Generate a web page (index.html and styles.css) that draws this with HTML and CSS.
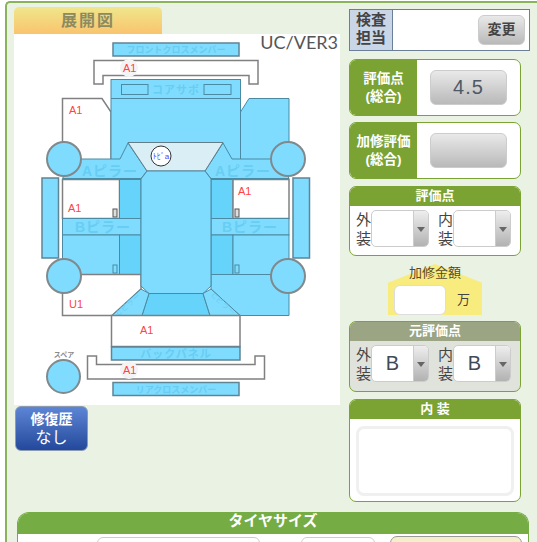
FILE: index.html
```html
<!DOCTYPE html>
<html lang="ja">

<head>
    <meta charset="UTF-8">
    <meta name="viewport" content="width=device-width, initial-scale=1.0">
    <title>展開図</title>
    <link rel="stylesheet" href="styles.css">
</head>

<body>
    <div class="frame">
        <div class="main">
            <div class="left">
                <div class="tab">展開図</div>
                <svg class="diagram" width="326" height="371" viewBox="14 34 326 371">
                    <!-- front -->
                    <rect class="part edge" x="113" y="43" width="126" height="13"/>
                    <text class="faint small" x="176" y="53">フロントクロスメンバー</text>
                    <path class="blank" d="M94 60.500H258V84H249V75.500H103V84H94Z"/>
                    <circle class="bubble" cx="129" cy="68" r="9"/>
                    <text class="mark" x="123" y="72">A1</text>

                    <!-- core support and fenders -->
                    <path class="blank" d="M62.500 98.500H102L111 112V160H62.500Z"/>
                    <rect class="part" x="111" y="79.500" width="129.500" height="95"/>
                    <path class="line" d="M111 98.500H240.500"/>
                    <rect class="part" x="121.500" y="84.500" width="26.500" height="10"/>
                    <rect class="part" x="204" y="84.500" width="27" height="10"/>
                    <text class="faint mid" x="176" y="94">コアサポ</text>
                    <path class="part" d="M240.500 112L249 98.500H289V160H240.500Z"/>

                    <!-- side skirts -->
                    <rect class="part edge" x="42" y="178" width="16.500" height="80"/>
                    <rect class="part edge" x="293" y="178" width="16.500" height="80"/>

                    <!-- left doors -->
                    <rect class="blank" x="62.500" y="179.500" width="57" height="39"/>
                    <rect class="deep" x="119.500" y="179.500" width="21.500" height="39"/>
                    <rect class="part" x="62.500" y="218.500" width="78.500" height="16.500"/>
                    <text class="faint" x="103" y="232">Bピラー</text>
                    <rect class="part" x="62.500" y="235" width="57" height="39.500"/>
                    <rect class="deep" x="119.500" y="235" width="21.500" height="39.500"/>

                    <!-- right doors -->
                    <rect class="deep" x="211" y="179.500" width="22" height="39"/>
                    <rect class="blank" x="233" y="179.500" width="56" height="39"/>
                    <rect class="part" x="211" y="218.500" width="78" height="16.500"/>
                    <text class="faint" x="250" y="232">Bピラー</text>
                    <rect class="deep" x="211" y="235" width="22" height="39.500"/>
                    <rect class="part" x="233" y="235" width="56" height="39.500"/>

                    <rect class="tag" x="113" y="209" width="4" height="8"/>
                    <rect class="tag" x="235" y="209" width="4" height="8"/>
                    <rect class="tag dim" x="113" y="265" width="4" height="8"/>
                    <rect class="tag dim" x="235" y="265" width="4" height="8"/>

                    <!-- rear quarters -->
                    <path class="blank" d="M62.500 274.500H141V289L112 315.500H62.500Z"/>
                    <path class="part" d="M211 274.500H289V315.500H240L211 289Z"/>

                    <!-- windshield and pillars -->
                    <path class="part" d="M62.500 178.500L72 159H120L128 143L147 171L141 178.500Z"/>
                    <path class="part" d="M289 178.500L280 159H232L223 143L205 171L211 178.500Z"/>
                    <text class="faint" x="110" y="176">Aピラー</text>
                    <text class="faint" x="243" y="176">Aピラー</text>
                    <path class="glass" d="M128 142.500H223L205 171H147Z"/>
                    <circle class="badge" cx="161" cy="156" r="10"/>
                    <text class="badge-text" x="161" y="159">ﾄﾋﾞa</text>

                    <!-- roof and rear glass -->
                    <path class="part" d="M147 171H205L211 179V286L203 293.500H149L141 286V179Z"/>
                    <path class="deep" d="M149 293.500H203L210 315.500H142Z"/>
                    <path class="part" d="M112 315.500L141 289L149 293.500L142 315.500Z"/>
                    <path class="part" d="M240 315.500L211 289L203 293.500L210 315.500Z"/>
                    <text class="faint tiny" transform="translate(130 306) rotate(-42)">Cピラー</text>
                    <text class="faint tiny" transform="translate(222 306) rotate(42)">Cピラー</text>

                    <!-- rear -->
                    <rect class="blank" x="111.500" y="315.500" width="128.500" height="31"/>
                    <rect class="part edge" x="111.500" y="347" width="128.500" height="13"/>
                    <text class="faint mid" x="176" y="358">バックパネル</text>
                    <path class="blank" d="M87.500 356H96.500V364.500H255V356H264.500V379H87.500Z"/>
                    <circle class="bubble" cx="129" cy="370" r="9"/>
                    <rect class="part edge" x="113" y="382.500" width="126" height="13"/>
                    <text class="faint small" x="176" y="392.500">リアクロスメンバー</text>

                    <!-- wheels -->
                    <circle class="wheel" cx="64" cy="159" r="17"/>
                    <circle class="wheel" cx="288" cy="159" r="17"/>
                    <circle class="wheel" cx="64" cy="276" r="17"/>
                    <circle class="wheel" cx="288" cy="276" r="17"/>
                    <circle class="wheel" cx="63.500" cy="376.500" r="16.500"/>
                    <text class="spare" x="64" y="357">スペア</text>

                    <text class="mark" x="69" y="114">A1</text>
                    <text class="mark" x="68" y="212">A1</text>
                    <text class="mark" x="238" y="195">A1</text>
                    <text class="mark" x="69" y="308">U1</text>
                    <text class="mark" x="140" y="334">A1</text>
                    <text class="mark" x="123" y="374">A1</text>
                    <text class="version" x="338" y="49">UC/VER3</text>
                </svg>
                <div class="repair">
                    <span class="repair-title">修復歴</span>
                    <span class="repair-value">なし</span>
                </div>
            </div>

            <div class="right">
                <div class="inspector">
                    <div class="inspector-label">検査<br>担当</div>
                    <div class="inspector-body">
                        <div class="btn btn-change">変更</div>
                    </div>
                </div>

                <div class="score">
                    <div class="score-label">評価点<br>(総合)</div>
                    <div class="score-body">
                        <div class="btn btn-score">4.5</div>
                    </div>
                </div>
                <div class="score">
                    <div class="score-label">加修評価<br>(総合)</div>
                    <div class="score-body">
                        <div class="btn btn-score"></div>
                    </div>
                </div>

                <div class="panel panel-rate">
                    <div class="panel-head">評価点</div>
                    <div class="picks">
                        <div class="pick-label">外<br>装</div>
                        <div class="pick">
                            <div class="pick-value"></div>
                            <div class="pick-arrow"></div>
                        </div>
                        <div class="pick-label">内<br>装</div>
                        <div class="pick">
                            <div class="pick-value"></div>
                            <div class="pick-arrow"></div>
                        </div>
                    </div>
                </div>

                <div class="amount">
                    <div class="amount-title">加修金額</div>
                    <div class="amount-row">
                        <div class="amount-input"></div>
                        <div class="amount-unit">万</div>
                    </div>
                </div>

                <div class="panel panel-orig">
                    <div class="panel-head">元評価点</div>
                    <div class="picks">
                        <div class="pick-label">外<br>装</div>
                        <div class="pick">
                            <div class="pick-value">B</div>
                            <div class="pick-arrow"></div>
                        </div>
                        <div class="pick-label">内<br>装</div>
                        <div class="pick">
                            <div class="pick-value">B</div>
                            <div class="pick-arrow"></div>
                        </div>
                    </div>
                </div>

                <div class="panel panel-inner">
                    <div class="panel-head">内 装</div>
                    <div class="note"></div>
                </div>
            </div>
        </div>

        <div class="tire">
            <div class="tire-head">タイヤサイズ</div>
            <div class="tire-body">
                <div class="tire-input tire-wide"></div>
                <div class="tire-input tire-narrow"></div>
                <div class="tire-button"></div>
            </div>
        </div>
    </div>
</body>

</html>
```

FILE: styles.css
```css
html,
body {
    margin: 0;
    padding: 0;
    height: 542px;
    overflow: hidden;
    background-color: #fff;
    font-family: "Liberation Sans", "Noto Sans CJK JP", sans-serif;
    color: #444;
}

.frame {
    margin: 1px 0 0 5px;
    width: 532px;
    height: 541px;
    box-sizing: border-box;
    overflow: hidden;
    background-color: #eaf2e3;
    border-top: 2px solid #8ab35c;
    border-left: 2px solid #8ab35c;
    border-top-left-radius: 5px;
}

.main {
    display: flex;
    height: 497px;
}

/* left column */
.left {
    width: 326px;
    margin-left: 7px;
    padding-top: 4px;
}

.tab {
    width: 148px;
    height: 27px;
    line-height: 27px;
    text-align: center;
    font-size: 16px;
    font-weight: bold;
    letter-spacing: 2px;
    color: #8c8a60;
    background: linear-gradient(#f0e68c, #f9c46d);
    border-radius: 5px 5px 0 0;
}

.diagram {
    display: block;
    background-color: #fff;
}

.part {
    fill: #7fdcff;
    stroke: #4a8aa2;
    stroke-width: 1;
}

.edge {
    stroke: #5f8494;
    stroke-width: 1.5;
}

.deep {
    fill: #66d4fa;
    stroke: #4a8aa2;
    stroke-width: 1;
}

.blank {
    fill: #fff;
    stroke: #808080;
    stroke-width: 1.5;
}

.line {
    fill: none;
    stroke: #4a8aa2;
}

.glass {
    fill: #d9eef5;
    stroke: #607d88;
    stroke-width: 1;
}

.wheel {
    fill: #7fdcff;
    stroke: #80898c;
    stroke-width: 2;
}

.bubble {
    fill: #f4f4f4;
}

.badge {
    fill: #fff;
    stroke: #333;
}

.badge-text {
    font-size: 8px;
    fill: #4a4aff;
    text-anchor: middle;
}

.tag {
    fill: #ddd;
    stroke: #555;
}

.dim {
    fill: none;
    stroke: #4a8aa2;
}

.faint {
    font-size: 14px;
    font-weight: bold;
    fill: #68cdf2;
    text-anchor: middle;
    letter-spacing: 1px;
}

.mid {
    font-size: 11px;
}

.small {
    font-size: 9px;
    letter-spacing: 0;
}

.tiny {
    font-size: 7px;
    font-weight: normal;
}

.spare {
    font-size: 7px;
    font-weight: bold;
    fill: #8a8a8a;
    text-anchor: middle;
}

.mark {
    font-size: 11px;
    fill: #f44;
}

.version {
    font-family: Lato, sans-serif;
    font-size: 18px;
    fill: #555;
    text-anchor: end;
}

.repair {
    display: flex;
    flex-direction: column;
    align-items: center;
    width: 73px;
    height: 45px;
    margin: 1px 0 0 1px;
    box-sizing: border-box;
    padding-top: 3px;
    color: #fff;
    background: linear-gradient(#5d85d5, #24499c);
    border: 1px solid #8c9bb0;
    border-radius: 6px;
}

.repair-title {
    font-size: 14px;
    line-height: 18px;
    font-weight: bold;
}

.repair-value {
    font-size: 16px;
    line-height: 20px;
}

/* right column */
.right {
    width: 181px;
    margin-left: 9px;
    padding-top: 6px;
}

.inspector {
    display: flex;
    height: 42px;
    box-sizing: border-box;
    border: 1px solid #6b7f99;
    background-color: #fff;
}

.inspector-label {
    width: 43px;
    padding-top: 1px;
    box-sizing: border-box;
    text-align: center;
    font-size: 15px;
    line-height: 18px;
    font-weight: bold;
    background-color: #c9d6e8;
    border-right: 1px solid #6b7f99;
}

.inspector-body {
    flex: 1;
    display: flex;
    justify-content: flex-end;
    padding: 5px 4px 0 0;
}

.btn {
    box-sizing: border-box;
    text-align: center;
    background: linear-gradient(#e9e9e9, #b9b9b9);
    border: 1px solid #ccc;
    border-radius: 6px;
}

.btn-change {
    width: 47px;
    height: 30px;
    line-height: 27px;
    font-size: 14px;
    font-weight: bold;
}

.score {
    display: flex;
    width: 172px;
    height: 57px;
    margin-top: 6px;
    box-sizing: border-box;
    background-color: #fff;
    border: 1px solid #7ba334;
    border-radius: 7px;
    overflow: hidden;
}

.inspector + .score {
    margin-top: 8px;
}

.score-label {
    display: flex;
    align-items: center;
    justify-content: center;
    width: 67px;
    text-align: center;
    font-size: 13.500px;
    line-height: 18px;
    font-weight: bold;
    color: #fff;
    background-color: #7ba334;
}

.score-body {
    padding: 10px 0 0 13px;
}

.btn-score {
    width: 77px;
    height: 35px;
    line-height: 33px;
    font-size: 20px;
    letter-spacing: 1px;
    color: #4d5966;
}

.panel {
    width: 172px;
    margin-top: 7px;
    box-sizing: border-box;
    background-color: #fff;
    border: 1px solid #7ba334;
    border-radius: 7px;
    overflow: hidden;
}

.panel-head {
    height: 19px;
    line-height: 18px;
    text-align: center;
    font-size: 13px;
    font-weight: bold;
    color: #fff;
    background-color: #7ba334;
}

.panel-rate {
    height: 70px;
}

.panel-orig {
    height: 71px;
    margin-top: 6px;
    background-color: #e0e3dc;
}

.panel-orig .panel-head {
    height: 19px;
    background-color: #9ba583;
}

.panel-inner {
    height: 103px;
}

.picks {
    display: flex;
    padding: 4px 0 0 6px;
}

.pick-label {
    width: 15px;
    font-size: 15px;
    line-height: 19px;
    color: #444;
}

.pick {
    display: flex;
    width: 59px;
    height: 37px;
    margin-right: 9px;
    box-sizing: border-box;
    border: 1px solid #ccc;
    border-radius: 5px;
    overflow: hidden;
    background-color: #fff;
}

.pick-value {
    flex: 1;
    text-align: center;
    font-size: 20px;
    line-height: 34px;
    color: #3f4a58;
}

.pick-arrow {
    position: relative;
    width: 14px;
    background: linear-gradient(#eee, #b2b2b2);
    border-left: 1px solid #ccc;
}

.pick-arrow::after {
    content: "";
    position: absolute;
    left: 3px;
    top: 16px;
    border-left: 4px solid transparent;
    border-right: 4px solid transparent;
    border-top: 5px solid #666;
}

/* the yellow house shape sits behind the title so the title is not cut */
.amount {
    position: relative;
    width: 94px;
    height: 51px;
    margin: 8px 0 0 39px;
}

.amount::before {
    content: "";
    position: absolute;
    left: 0;
    top: 0;
    width: 100%;
    height: 100%;
    background-color: #f9ec7e;
    clip-path: polygon(50% 0, 100% 37%, 100% 100%, 0 100%, 0 37%);
}

.amount-title {
    position: relative;
    height: 21px;
    line-height: 18px;
    text-align: center;
    font-size: 13px;
    color: #5a4a2a;
}

.amount-row {
    position: relative;
    display: flex;
    padding-left: 6px;
}

.amount-input {
    width: 52px;
    height: 30px;
    box-sizing: border-box;
    background-color: #fff;
    border: 1px solid #ddd;
    border-radius: 6px;
}

.amount-unit {
    margin-left: 11px;
    font-size: 13px;
    line-height: 30px;
}

.note {
    height: 70px;
    margin: 7px 6px 0;
    box-sizing: border-box;
    background-color: #fff;
    border: 3px solid #f0f0f0;
    border-radius: 8px;
}

/* tire size */
.tire {
    width: 512px;
    height: 30px;
    margin: 12px 0 0 10px;
    box-sizing: border-box;
    background-color: #fff;
    border: 1px solid #75ad44;
    border-bottom: 0;
    border-radius: 12px 12px 0 0;
    overflow: hidden;
}

.tire-head {
    height: 21px;
    line-height: 16px;
    text-align: center;
    font-size: 15px;
    font-weight: bold;
    color: #fff;
    background-color: #75ad44;
}

.tire-body {
    display: flex;
    padding: 3px 0 0 79px;
}

.tire-input {
    height: 30px;
    box-sizing: border-box;
    border: 1px solid #ccc;
    border-radius: 6px;
}

.tire-wide {
    width: 163px;
}

.tire-narrow {
    width: 74px;
    margin-left: 41px;
}

.tire-button {
    width: 132px;
    height: 30px;
    margin: -1px 0 0 15px;
    box-sizing: border-box;
    background-color: #f5eecb;
    border: 1px solid #999;
    border-radius: 7px;
}
```
